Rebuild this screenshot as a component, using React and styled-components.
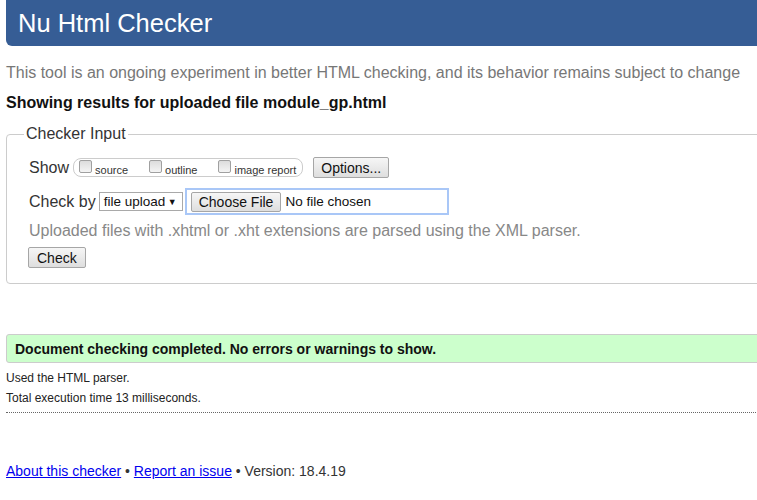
import React from 'react';
import styled, { createGlobalStyle } from 'styled-components';

const GlobalStyle = createGlobalStyle`
  html, body {
    margin: 0;
    padding: 0;
    background: #fff;
    overflow: hidden;
  }
  body {
    font-family: "Liberation Sans", Arial, sans-serif;
    color: #222;
  }
  *, *::before, *::after {
    box-sizing: border-box;
  }
`;

const Page = styled.div`
  width: 826px;
  padding-left: 6px;
`;

const Header = styled.h1`
  margin: 0;
  height: 46px;
  padding-left: 12px;
  display: flex;
  align-items: center;
  background: #365d95;
  border-radius: 0 0 6px 6px;
  color: #fff;
  font-size: 25.5px;
  font-weight: normal;
`;

const Tagline = styled.p`
  margin: 17px 0 0;
  font-size: 16px;
  line-height: 20px;
  color: #777;
`;

const Subtitle = styled.h2`
  margin: 10px 0 0;
  font-size: 16px;
  line-height: 20px;
  font-weight: bold;
  color: #111;
`;

const Fieldset = styled.fieldset`
  margin: 12px 0 0;
  padding: 0 0 15px 22px;
  border: 1px solid #ccc;
  border-radius: 4px;
`;

const Legend = styled.legend`
  margin-left: -5px;
  padding: 0 2px;
  font-size: 16px;
  line-height: 18px;
  color: #333;
`;

const Row = styled.div`
  display: flex;
  align-items: center;
  gap: ${(p) => p.gap || 4}px;
  margin-top: ${(p) => p.top || 0}px;
`;

const Label = styled.span`
  font-size: 16px;
  color: #333;
`;

const OptionGroup = styled.span`
  display: inline-flex;
  align-items: flex-start;
  height: 19px;
  padding: 1px 6px 0 5px;
  border: 1px solid #ccc;
  border-radius: 8px;
`;

const Option = styled.label`
  display: inline-flex;
  align-items: flex-start;
  gap: 3px;
  margin-right: ${(p) => (p.last ? 0 : 21)}px;
  font-size: 11px;
  line-height: 12px;
  color: #333;

  span:last-child {
    padding-top: 4px;
  }
`;

const Box = styled.span`
  width: 13px;
  height: 13px;
  border: 1px solid #a0a0a0;
  border-radius: 2px;
  background: linear-gradient(#dcdcdc, #f4f4f4);
`;

const Button = styled.button`
  height: ${(p) => p.h || 21}px;
  padding: 0 ${(p) => p.px || 8}px;
  border: 1px solid #a6a6a6;
  border-radius: 2px;
  background: linear-gradient(#f6f6f6, #dedede);
  font-family: "Liberation Sans", Arial, sans-serif;
  font-size: 14px;
  color: #111;
`;

const Select = styled.span`
  display: inline-flex;
  align-items: center;
  justify-content: space-between;
  width: 84px;
  height: 19px;
  padding: 0 5px 0 4px;
  border: 1px solid #a9a9a9;
  font-size: 13.5px;
  color: #111;

  small {
    font-size: 9px;
  }
`;

const FileBox = styled.span`
  display: inline-flex;
  align-items: center;
  gap: 4px;
  width: 264px;
  height: 27px;
  padding: 0 4px;
  border: 2px solid #a9c7f7;
  font-size: 13.5px;
  color: #111;
`;

const Note = styled.p`
  margin: 6px 0 0;
  font-size: 16px;
  line-height: 20px;
  color: #888;
`;

const Success = styled.div`
  margin-top: 50px;
  height: 29px;
  padding-left: 8px;
  display: flex;
  align-items: center;
  background: #ccffcc;
  border: 1px solid #ccc;
  border-radius: 3px;
  font-size: 14px;
  font-weight: bold;
  color: #111;
`;

const Detail = styled.p`
  margin: ${(p) => p.top || 0}px 0 0;
  font-size: 12px;
  line-height: 20px;
  color: #222;
`;

const Rule = styled.div`
  margin-top: 4px;
  border-top: 1px dotted #666;
`;

const Footer = styled.p`
  margin: 48px 0 0;
  font-size: 14px;
  line-height: 20px;
  color: #333;

  a {
    color: #0000ee;
    text-decoration: underline;
  }
`;

export default function App() {
  return (
    <Page>
      <GlobalStyle />
      <Header>Nu Html Checker</Header>
      <Tagline>
        This tool is an ongoing experiment in better HTML checking, and its behavior remains subject to change
      </Tagline>
      <Subtitle>Showing results for uploaded file module_gp.html</Subtitle>

      <Fieldset>
        <Legend>Checker Input</Legend>
        <Row top={14} gap={4}>
          <Label>Show</Label>
          <OptionGroup>
            <Option><Box /><span>source</span></Option>
            <Option><Box /><span>outline</span></Option>
            <Option last><Box /><span>image report</span></Option>
          </OptionGroup>
          <Button px={7} style={{ marginLeft: 6 }}>Options...</Button>
        </Row>
        <Row top={10} gap={2}>
          <Label style={{ marginRight: 1 }}>Check by</Label>
          <Select>file upload <small>▼</small></Select>
          <FileBox>
            <Button h={20} px={7}>Choose File</Button>
            No file chosen
          </FileBox>
        </Row>
        <Note>Uploaded files with .xhtml or .xht extensions are parsed using the XML parser.</Note>
        <Row top={6}>
          <Button px={8} style={{ marginLeft: -1 }}>Check</Button>
        </Row>
      </Fieldset>

      <Success>Document checking completed. No errors or warnings to show.</Success>
      <Detail top={5}>Used the HTML parser.</Detail>
      <Detail>Total execution time 13 milliseconds.</Detail>
      <Rule />
      <Footer>
        <a href="#about">About this checker</a> • <a href="#report">Report an issue</a> • Version: 18.4.19
      </Footer>
    </Page>
  );
}
